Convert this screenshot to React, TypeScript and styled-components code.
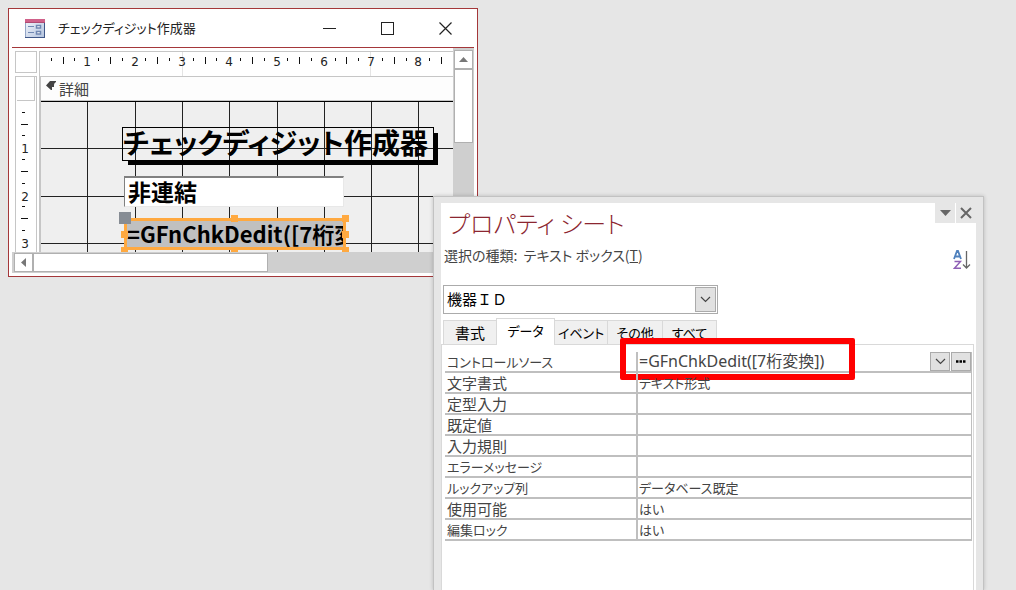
import React from "react";
import styled, { createGlobalStyle } from "styled-components";

const GlobalStyle = createGlobalStyle`
  * { box-sizing: border-box; }
  html, body { margin: 0; background: #e6e6e6; }
  body, button, input, select {
    font-family: "Noto Sans CJK JP", "Noto Sans", sans-serif;
    font-feature-settings: "palt";
  }
  button, input, select { margin: 0; padding: 0; border: 0; border-radius: 0; background: none; color: inherit; }
  svg { display: block; }
`;

const Desktop = styled.main`
  position: relative;
  min-height: 100vh;
  overflow: hidden;
  background: #e6e6e6;
`;

/* ---------- form design window ---------- */

const FormWindow = styled.section`
  position: absolute;
  left: 8px;
  top: 8px;
  width: calc(50% - 38px);
  padding: 0 3px 3px;
  border: 1px solid #a4373a;
  background: #fff;
`;

const TitleBar = styled.header`
  display: flex;
  align-items: center;
  height: 39px;
  padding-left: 13px;
  border-bottom: 1px solid #a4373a;
`;

const WindowTitle = styled.h1`
  flex: 1;
  margin: 0 0 0 13px;
  font-size: 13px;
  font-weight: 400;
  line-height: 20px;
  color: #222;
  white-space: nowrap;
`;

const CaptionButton = styled.button`
  display: grid;
  place-items: center;
  width: 58px;
  height: 38px;
`;

const FormBody = styled.div`
  display: grid;
  grid-template-columns: 27px minmax(0, 1fr) 21px;
  grid-template-rows: 28px 176px 21px;
`;

const Corner = styled.div`
  width: 22px;
  height: 22px;
  margin: 3px 0 0 3px;
  border: 1px solid #c6c6c6;
`;

const TopRuler = styled.div`
  margin-top: 3px;
  overflow: hidden;
  border-top: 1px solid #c6c6c6;
  border-left: 1px solid #c6c6c6;
`;

const SideRuler = styled.div`
  width: 22px;
  margin-left: 3px;
  overflow: hidden;
  border: 1px solid #c6c6c6;
  border-bottom: 0;
`;

const SectionSelector = styled.div`
  height: 24px;
  margin: 0 1px 0 1px;
  border-right: 1px solid #c6c6c6;
  border-bottom: 1px solid #c6c6c6;
`;

const DesignPane = styled.div`
  display: flex;
  flex-direction: column;
  overflow: hidden;
  border-left: 2px solid #c6c6c6;
  border-top: 1px solid #c6c6c6;
`;

const SectionBar = styled.div`
  display: flex;
  align-items: center;
  gap: 3px;
  height: 25px;
  flex: none;
  padding-left: 5px;
  border-bottom: 1px solid #000;
  box-shadow: inset 0 -1px #c6c6c6;
  background: #fdfdfd;
  font-size: 15px;
  line-height: 24px;
  color: #444;
`;

const Canvas = styled.div`
  position: relative;
  flex: 1;
  overflow: hidden;
  background: #efefef;
`;

const FormLabel = styled.div`
  position: absolute;
  left: 81px;
  top: 25px;
  width: 312px;
  height: 34px;
  border: 1px solid #000;
  box-shadow: 5px 5px 0 -1px #000;
  font-size: 28px;
  font-weight: 700;
  line-height: 28px;
  color: #000;
  white-space: nowrap;
`;

const UnboundField = styled.input`
  position: absolute;
  left: 83px;
  top: 74px;
  width: 220px;
  height: 31px;
  && {
    padding: 0 0 3px 3px;
    border: 1px solid #e8e8e8;
    border-top: 2px solid #808080;
    border-left-color: #808080;
    background: #fff;
  }
  font-size: 23px;
  font-weight: 700;
  line-height: 25px;
  color: #000;
`;

const SelectedField = styled.div`
  position: absolute;
  left: 83px;
  top: 116px;
  width: 222px;
  height: 32px;
  border: 3px solid #ffa940;
`;

const FieldInput = styled.input`
  display: block;
  width: 100%;
  height: 26px;
  && {
    padding-bottom: 3px;
    background: #c0c0c0;
  }
  font-size: 22px;
  font-weight: 700;
  line-height: 23px;
  color: #000;
`;

const Handle = styled.i<{ $x: string; $y: string }>`
  position: absolute;
  left: ${(p) => p.$x};
  top: ${(p) => p.$y};
  width: 7px;
  height: 7px;
  background: #ffa940;
`;

const MoveHandle = styled.i`
  position: absolute;
  left: -8px;
  top: -9px;
  width: 12px;
  height: 12px;
  background: #868c94;
`;

const VerticalScroll = styled.div`
  grid-column: 3;
  grid-row: 1 / 3;
  display: flex;
  flex-direction: column;
  padding: 2px 1px 0 1px;
  background: #cfcfcf;
`;

const HorizontalScroll = styled.div`
  grid-column: 1 / 4;
  display: flex;
  padding: 1px 0 1px 2px;
  background: #cfcfcf;
`;

const ScrollButton = styled.button`
  display: grid;
  place-items: center;
  flex: none;
  width: 19px;
  height: 19px;
  && {
    border: 1px solid #b0b0b0;
    background: #fff;
  }
`;

const ScrollThumb = styled.div<{ $w: string; $h: string }>`
  width: ${(p) => p.$w};
  height: ${(p) => p.$h};
  border: 1px solid #b0b0b0;
  background: #fff;
`;

/* ---------- property sheet ---------- */

const Sheet = styled.aside`
  position: absolute;
  left: calc(50% - 75px);
  right: 32px;
  top: 196px;
  bottom: 0;
  min-height: 394px;
  padding: 6px 7px 0;
  border: 1px solid #c2c2c2;
  border-bottom: 0;
  background: #e6e6e6;
  box-shadow: 0 0 4px rgba(0, 0, 0, 0.2);
  color: #444;
`;

const SheetBody = styled.div`
  height: 100%;
  background: #fff;
`;

const SheetHeader = styled.header`
  display: flex;
  justify-content: space-between;
  align-items: flex-start;
  height: 40px;
  padding-left: 7px;
`;

const SheetTitle = styled.h2`
  margin: 0;
  font-size: 24px;
  font-weight: 300;
  line-height: 40px;
  color: #8c2630;
  white-space: nowrap;
`;

const PaneButtons = styled.div`
  display: flex;
  gap: 1px;
`;

const PaneButton = styled.button`
  display: grid;
  place-items: center;
  width: 20px;
  height: 20px;
  && { background: #e6e6e6; }
`;

const SelectionRow = styled.div`
  display: flex;
  justify-content: space-between;
  align-items: flex-start;
  height: 42px;
  padding: 0 5px 0 3px;
  font-size: 14px;
  line-height: 24px;
  white-space: pre;
`;

const SortButton = styled.button`
  margin-top: 7px;
`;

const Combo = styled.div`
  position: relative;
  width: 275px;
  height: 29px;
  margin-left: 2px;
  border: 1px solid #ababab;
`;

const ComboSelect = styled.select`
  appearance: none;
  display: block;
  width: 100%;
  height: 25px;
  && { padding-left: 3px; color: #000; }
  font-feature-settings: normal;
  font-size: 15px;
  line-height: 24px;
`;

const ComboArrow = styled.span`
  position: absolute;
  right: 1px;
  top: 1px;
  display: grid;
  place-items: center;
  width: 21px;
  height: 25px;
  border: 1px solid #ababab;
  background: #e1e1e1;
  pointer-events: none;
`;

const TabList = styled.div`
  display: flex;
  align-items: flex-end;
  height: 30px;
  padding-left: 2px;
`;

const Tab = styled.button<{ $active?: boolean; $kana?: boolean; $w: number }>`
  position: relative;
  width: ${(p) => p.$w}px;
  height: ${(p) => (p.$active ? 27 : 24)}px;
  margin-bottom: ${(p) => (p.$active ? -1 : 0)}px;
  && {
    padding-bottom: ${(p) => (p.$active ? 3 : 0)}px;
    border: 1px solid #d9d9d9;
    border-bottom: 0;
    border-left-width: ${(p) => (p.$active ? 1 : 0)}px;
    background: ${(p) => (p.$active ? "#fff" : "#f0f0f0")};
    color: #000;
  }
  font-size: ${(p) => (p.$kana ? 13 : 15)}px;
  line-height: 23px;
  white-space: nowrap;
  &&:first-child { border-left-width: 1px; border-right-width: 0; }
`;

const TabPanel = styled.div`
  height: calc(100% - 141px);
  margin-right: 2px;
  padding: 7px 1px 0 3px;
  border: 1px solid #d9d9d9;
  border-bottom: 0;
`;

const PropertyTable = styled.table`
  width: 100%;
  table-layout: fixed;
  border-collapse: separate;
  border-spacing: 0;
  font-size: 15px;
  line-height: 19px;
`;

const NameCell = styled.th<{ $kana?: boolean }>`
  width: 191px;
  height: 21px;
  padding: 0 0 0 2px;
  border-bottom: 2px solid #bfbfbf;
  font-size: ${(p) => (p.$kana ? 13 : 15)}px;
  font-weight: 400;
  text-align: left;
  white-space: nowrap;
`;

const ValueCell = styled.td`
  position: relative;
  height: 21px;
  padding: 0 0 0 1px;
  border-bottom: 2px solid #bfbfbf;
  border-left: 2px solid #bfbfbf;
  border-right: 1px solid #bfbfbf;
`;

const ValueRow = styled.div`
  display: flex;
  gap: 1px;
  height: 19px;
`;

const ValueInput = styled.input<{ $kana?: boolean; $formula?: boolean }>`
  flex: 1;
  min-width: 0;
  height: 19px;
  font-family: ${(p) => (p.$formula ? '"Noto Sans", "Noto Sans CJK JP", sans-serif' : '"Noto Sans CJK JP", sans-serif')};
  font-size: ${(p) => (p.$formula ? 16 : p.$kana ? 13 : 15)}px;
  line-height: 19px;
  outline: 0;
`;

const CellButton = styled.button`
  display: grid;
  place-items: center;
  flex: none;
  width: 20px;
  height: 19px;
  && {
    border: 1px solid #ababab;
    background: #e1e1e1;
  }
`;

const Highlight = styled.span`
  position: absolute;
  left: -18px;
  top: -14px;
  width: 235px;
  height: 42px;
  border: 6px solid #f00;
  border-radius: 2px;
  pointer-events: none;
`;

/* ---------- data ---------- */

type Property = { name: string; value: string; builder?: boolean };

const properties: Property[] = [
  { name: "コントロールソース", value: "=GFnChkDedit([7桁変換])", builder: true },
  { name: "文字書式", value: "テキスト形式" },
  { name: "定型入力", value: "" },
  { name: "既定値", value: "" },
  { name: "入力規則", value: "" },
  { name: "エラーメッセージ", value: "" },
  { name: "ルックアップ列", value: "データベース既定" },
  { name: "使用可能", value: "はい" },
  { name: "編集ロック", value: "はい" },
];

const tabs = [
  { label: "書式", width: 53 },
  { label: "データ", width: 59, active: true },
  { label: "イベント", width: 53 },
  { label: "その他", width: 55 },
  { label: "すべて", width: 54 },
];

/* Kana-heavy captions are set one step smaller than kanji ones. */
const hasKana = (text: string) => /[\u3041-\u30ff]/.test(text);

/* ---------- drawings ---------- */

const unit = 47.3;
const steps = (count: number) => Array.from({ length: count }, (_, i) => i + 1);

const HorizontalTicks = () => (
  <svg width="100%" height="24">
    <path d="M142.500 0V24M330.500 0V24" stroke="#e4e4e4" />
    {steps(34).map((q) => {
      const x = Math.round((q * unit) / 4);
      if (q % 4 === 0)
        return (
          <text key={q} x={x} y="14" fontSize="12" fontFamily="DejaVu Sans, sans-serif" textAnchor="middle" fill="#222">
            {q / 4}
          </text>
        );
      const half = q % 2 === 0;
      return <rect key={q} x={x - 1} y={half ? 5 : 6} width="1" height={half ? 7 : 3} fill="#111" />;
    })}
  </svg>
);

const VerticalTicks = () => (
  <svg width="20" height="152">
    {steps(12).map((q) => {
      const y = Math.round((q * unit) / 4);
      if (q % 4 === 0)
        return (
          <text key={q} x="9" y={y + 5} fontSize="12" fontFamily="DejaVu Sans, sans-serif" textAnchor="middle" fill="#222">
            {q / 4}
          </text>
        );
      const half = q % 2 === 0;
      return <rect key={q} x={half ? 5 : 6} y={y - 1} width={half ? 7 : 3} height="1" fill="#111" />;
    })}
  </svg>
);

const GridLines = () => (
  <svg width="100%" height="100%">
    {steps(40).map((n) => (
      <rect key={n} x={Math.round(n * unit) - 1} y="0" width="1" height="100%" fill="#222" />
    ))}
    {steps(20).map((n) => (
      <rect key={n} x="0" y={Math.round(n * unit) - 1} width="100%" height="1" fill="#222" />
    ))}
  </svg>
);

const FormIcon = () => (
  <svg width="20" height="19" viewBox="0 0 20 19">
    <defs>
      <linearGradient id="formIconFace" x1="0" y1="0" x2="1" y2="1">
        <stop offset="0" stopColor="#f4f7fc" />
        <stop offset="1" stopColor="#b3c3de" />
      </linearGradient>
    </defs>
    <rect x="0.500" y="0.500" width="19" height="18" fill="url(#formIconFace)" stroke="#93a5c6" />
    <rect width="20" height="4" fill="#d0618a" />
    <rect y="3" width="20" height="1" fill="#b04a72" />
    <path d="M3 7.500H9M3 13.500H9" stroke="#7088b3" />
    <rect x="11.500" y="6.500" width="4" height="2.500" fill="#fff" stroke="#7088b3" strokeWidth="1.500" />
    <rect x="11.500" y="12.500" width="4" height="2.500" fill="#fff" stroke="#7088b3" strokeWidth="1.500" />
    <path d="M0 18.500H20M19.500 4V19" stroke="#3f5788" />
  </svg>
);

const Chevron = () => (
  <svg width="11" height="7" viewBox="0 0 11 7">
    <path d="M1 1L5.500 5.500L10 1" fill="none" stroke="#444" strokeWidth="1.200" />
  </svg>
);

export default function App() {
  return (
    <Desktop>
      <GlobalStyle />
      <FormWindow>
        <TitleBar>
          <FormIcon />
          <WindowTitle>チェックディジット作成器</WindowTitle>
          <CaptionButton aria-label="最小化">
            <svg width="13" height="13"><path d="M0 6.500H13" stroke="#222" /></svg>
          </CaptionButton>
          <CaptionButton aria-label="最大化">
            <svg width="13" height="13"><rect x="0.500" y="0.500" width="12" height="12" fill="none" stroke="#222" /></svg>
          </CaptionButton>
          <CaptionButton aria-label="閉じる">
            <svg width="13" height="13"><path d="M0.500 0.500L12.500 12.500M12.500 0.500L0.500 12.500" stroke="#222" strokeWidth="1.200" /></svg>
          </CaptionButton>
        </TitleBar>
        <FormBody>
          <Corner />
          <TopRuler><HorizontalTicks /></TopRuler>
          <VerticalScroll>
            <ScrollButton aria-label="上へ">
              <svg width="9" height="5"><path d="M0 5L4.500 0L9 5Z" fill="#777" /></svg>
            </ScrollButton>
            <ScrollThumb $w="19px" $h="74px" />
          </VerticalScroll>
          <SideRuler>
            <SectionSelector />
            <VerticalTicks />
          </SideRuler>
          <DesignPane>
            <SectionBar>
              <svg width="10" height="16" viewBox="0 0 10 16">
                <path d="M0 4.500L4 0H10V1Q8 2 8 4V6H6V9H5Z" fill="#444" />
              </svg>
              詳細
            </SectionBar>
            <Canvas>
              <GridLines />
              <FormLabel>チェックディジット作成器</FormLabel>
              <UnboundField aria-label="7桁変換" defaultValue="非連結" />
              <SelectedField>
                <FieldInput aria-label="機器ＩＤ" defaultValue="=GFnChkDedit([7桁変換])" />
                <Handle $x="calc(50% - 4px)" $y="-6px" />
                <Handle $x="calc(50% - 4px)" $y="26px" />
                <Handle $x="-6px" $y="10px" />
                <Handle $x="-6px" $y="26px" />
                <Handle $x="calc(100% - 1px)" $y="-6px" />
                <Handle $x="calc(100% - 1px)" $y="10px" />
                <Handle $x="calc(100% - 1px)" $y="26px" />
                <MoveHandle />
              </SelectedField>
            </Canvas>
          </DesignPane>
          <HorizontalScroll>
            <ScrollButton aria-label="左へ">
              <svg width="5" height="9"><path d="M5 0L0 4.500L5 9Z" fill="#777" /></svg>
            </ScrollButton>
            <ScrollThumb $w="51%" $h="19px" />
          </HorizontalScroll>
        </FormBody>
      </FormWindow>

      <Sheet>
        <SheetBody>
          <SheetHeader>
            <SheetTitle>プロパティ シート</SheetTitle>
            <PaneButtons>
              <PaneButton aria-label="オプション">
                <svg width="11" height="6"><path d="M0 0H11L5.500 6Z" fill="#666" /></svg>
              </PaneButton>
              <PaneButton aria-label="閉じる">
                <svg width="12" height="12"><path d="M1 1L11 11M11 1L1 11" stroke="#666" strokeWidth="2" /></svg>
              </PaneButton>
            </PaneButtons>
          </SheetHeader>
          <SelectionRow>
            <span>選択の種類:  テキスト ボックス(<u>T</u>)</span>
            <SortButton aria-label="並べ替え">
              <svg width="18" height="19" viewBox="0 0 18 19">
                <path d="M1 9L4 1H5L8 9M2 6.500H7" fill="none" stroke="#4f81bd" strokeWidth="1.800" />
                <path d="M1.500 11.500H7.500L1.500 18.200H8" fill="none" stroke="#8e5fb5" strokeWidth="1.400" />
                <path d="M13.500 1V18M10 14.500L13.500 18L17 14.500" fill="none" stroke="#666" strokeWidth="1.300" />
              </svg>
            </SortButton>
          </SelectionRow>
          <Combo>
            <ComboSelect aria-label="オブジェクト" defaultValue="id">
              <option value="id">機器ＩＤ</option>
            </ComboSelect>
            <ComboArrow><Chevron /></ComboArrow>
          </Combo>
          <TabList role="tablist">
            {tabs.map((t) => (
              <Tab key={t.label} role="tab" aria-selected={!!t.active} $active={t.active} $kana={hasKana(t.label)} $w={t.width}>
                {t.label}
              </Tab>
            ))}
          </TabList>
          <TabPanel role="tabpanel">
            <PropertyTable>
              <tbody>
                {properties.map((p, i) => (
                  <tr key={p.name}>
                    <NameCell scope="row" $kana={hasKana(p.name)}>
                      <label htmlFor={`property-${i}`}>{p.name}</label>
                    </NameCell>
                    <ValueCell>
                      <ValueRow>
                        <ValueInput
                          id={`property-${i}`}
                          defaultValue={p.value}
                          $kana={hasKana(p.value)}
                          $formula={p.value.startsWith("=")}
                        />
                        {p.builder && (
                          <>
                            <CellButton aria-label="一覧"><Chevron /></CellButton>
                            <CellButton aria-label="ビルダー">
                              <svg width="10" height="3">
                                <path d="M0 1.500H2.500M3.500 1.500H6M7 1.500H9.500" stroke="#000" strokeWidth="2.500" />
                              </svg>
                            </CellButton>
                          </>
                        )}
                      </ValueRow>
                      {p.builder && <Highlight />}
                    </ValueCell>
                  </tr>
                ))}
              </tbody>
            </PropertyTable>
          </TabPanel>
        </SheetBody>
      </Sheet>
    </Desktop>
  );
}
